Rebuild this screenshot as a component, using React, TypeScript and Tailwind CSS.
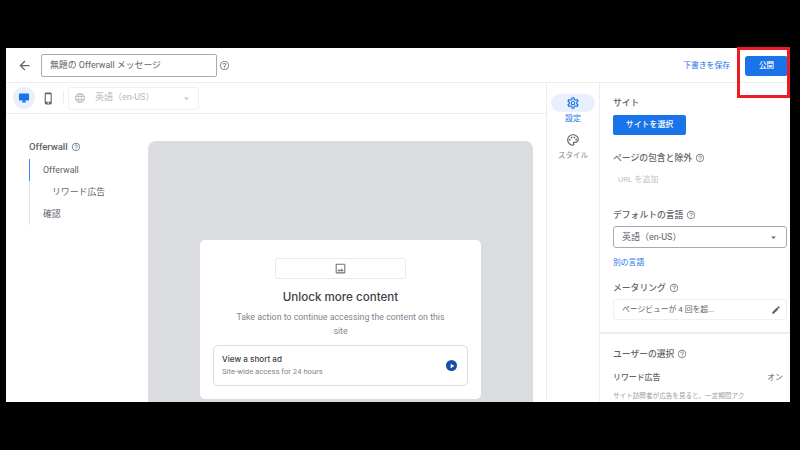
import React from "react";
import { MdArrowBack, MdDesktopWindows, MdPhoneIphone, MdLanguage, MdOutlineSettings, MdOutlinePalette, MdEdit, MdHelpOutline, MdOutlineImage, MdPlayArrow, MdArrowDropDown } from "react-icons/md";

const Help = ({ cls = "" }: { cls?: string }) => <MdHelpOutline className={"text-[#80868b] shrink-0 " + cls} />;

export default function App() {
  return (
    <div className="relative w-[800px] h-[450px] bg-black overflow-hidden pt-[48px] pl-[6px] font-['Roboto','Noto_Sans_CJK_JP',sans-serif]">
      <div className="w-[784px] h-[354px] bg-white overflow-hidden flex flex-col">
        {/* header */}
        <div className="h-[35px] shrink-0 border-b border-[#eceef0] flex items-center pl-[11px] pt-[1px]">
          <MdArrowBack className="text-[15px] text-[#5f6368] mr-[9px]" />
          <div className="w-[176px] h-[23px] border border-[#a8abb0] rounded-[2px] flex items-center pl-[8px] text-[8.9px] text-[#5f6368]">無題の Offerwall メッセージ</div>
          <Help cls="text-[11px] ml-[2px]" />
          <div className="ml-auto text-[7.8px] text-[#1a73e8] mr-[15px] whitespace-nowrap">下書きを保存</div>
          <div className="w-[43px] h-[20px] bg-[#1a73e8] rounded-[3px] text-white text-[7.5px] font-medium flex items-center justify-center mr-[2px]">公開</div>
        </div>
        <div className="flex-1 flex min-h-0">
          {/* main */}
          <div className="w-[541px] shrink-0 border-r border-[#eceef0] flex flex-col">
            <div className="h-[31px] shrink-0 border-b border-[#eceef0] flex items-center pl-[7px]">
              <div className="w-[22px] h-[22px] rounded-full bg-[#e8f0fe] flex items-center justify-center">
                <MdDesktopWindows className="text-[12px] text-[#1a73e8]" />
              </div>
              <MdPhoneIphone className="text-[13px] text-[#5f6368] ml-[7px]" />
              <div className="w-px h-[14px] bg-[#eceef0] ml-[8px]" />
              <div className="w-[131px] h-[23px] border border-[#eef0f1] rounded-[3px] ml-[4px] flex items-center pl-[5px] text-[9px] text-[#b5b8bc]">
                <MdLanguage className="text-[12px] text-[#bdc1c6]" />
                <span className="ml-[9px]">英語（en-US）</span>
                <MdArrowDropDown className="text-[11px] ml-auto mr-[6px] text-[#bdc1c6]" />
              </div>
            </div>
            <div className="flex-1 flex min-h-0">
              {/* nav */}
              <div className="w-[142px] shrink-0 pl-[23px] pt-[26px]">
                <div className="flex items-center gap-[3px] h-[14px] text-[9.5px] font-medium text-[#5f6368]">Offerwall<Help cls="text-[10px]" /></div>
                <div className="flex mt-[5px] w-[100px] text-[#5f6368] text-[8.9px]">
                  <div className="w-px shrink-0 flex flex-col">
                    <div className="h-[22px] bg-[#4285f4]" />
                    <div className="h-[44px] bg-[#e3e5e8]" />
                  </div>
                  <div className="pt-[1px]">
                    <div className="h-[22px] pl-[13px] flex items-center">Offerwall</div>
                    <div className="h-[22px] pl-[22px] flex items-center whitespace-nowrap">リワード広告</div>
                    <div className="h-[21px] pl-[13px] flex items-center">確認</div>
                  </div>
                </div>
              </div>
              {/* preview */}
              <div className="w-[385px] h-[300px] mt-[27px] bg-[#dadce0] rounded-t-[8px] pl-[52px] pt-[99px]">
                <div className="w-[281px] h-[159px] bg-white rounded-[5px] pt-[18px] flex flex-col items-center">
                  <div className="w-[131px] h-[21px] border border-[#e8eaed] rounded-[2px] flex items-center justify-center">
                    <MdOutlineImage className="text-[13px] text-[#6f7276]" />
                  </div>
                  <div className="mt-[10px] text-[11.6px] leading-[17px] font-medium text-[#3c4043] font-['Inter',sans-serif]">Unlock more content</div>
                  <div className="mt-[2px] w-[220px] text-center text-[8.8px] leading-[14px] text-[#80868b] pt-[2px]">Take action to continue accessing the content on this site</div>
                  <div className="mt-[7px] w-[255px] h-[41px] border border-[#dadce0] rounded-[5px] flex items-center pl-[8px] pr-[10px]">
                    <div className="flex-1">
                      <div className="text-[8.1px] leading-[12px] font-medium text-[#3c4043] font-['Inter',sans-serif]">View a short ad</div>
                      <div className="text-[7.7px] leading-[12px] mt-[1px] text-[#80868b]">Site-wide access for 24 hours</div>
                    </div>
                    <div className="w-[11px] h-[11px] rounded-full bg-[#174ea6] flex items-center justify-center">
                      <MdPlayArrow className="text-[8px] text-white" />
                    </div>
                  </div>
                </div>
              </div>
            </div>
          </div>
          {/* tabs */}
          <div className="w-[53px] shrink-0 border-r border-[#eceef0] flex flex-col items-center pt-[11px]">
            <div className="w-[44px] h-[18px] rounded-full bg-[#e8f0fe] flex items-center justify-center">
              <MdOutlineSettings className="text-[14px] text-[#1a73e8]" />
            </div>
            <div className="text-[8px] leading-[12px] text-[#1a73e8] mt-[1px]">設定</div>
            <MdOutlinePalette className="text-[14px] text-[#5f6368] mt-[8px]" />
            <div className="text-[7.5px] leading-[12px] text-[#80868b] mt-[3px] whitespace-nowrap">スタイル</div>
          </div>
          {/* panel */}
          <div className="flex-1 min-w-0 overflow-hidden">
            <div className="pl-[13px] pr-[3px] pt-[13px] h-[251px] border-b-2 border-[#eceef0]">
              <div className="text-[8.8px] leading-[14px] font-medium text-[#5f6368]">サイト</div>
              <div className="mt-[5px] w-[73px] h-[20px] bg-[#1a73e8] rounded-[2px] text-white text-[7.9px] font-medium flex items-center justify-center">サイトを選択</div>
              <div className="mt-[16px] flex items-center gap-[3px] text-[8.8px] leading-[14px] font-medium text-[#5f6368]">ページの包含と除外<Help cls="text-[10px]" /></div>
              <div className="mt-[9px] pl-[5px] text-[8px] leading-[12px] text-[#bdc1c6]">URL を追加</div>
              <div className="mt-[22px] flex items-center gap-[3px] text-[8.8px] leading-[14px] font-medium text-[#5f6368]">デフォルトの言語<Help cls="text-[10px]" /></div>
              <div className="mt-[4px] h-[22px] border border-[#a8abb0] rounded-[3px] flex items-center pl-[8px] pr-[7px] pt-[1px] text-[9px] text-[#5f6368]">
                英語（en-US）
                <MdArrowDropDown className="text-[11px] ml-auto text-[#5f6368]" />
              </div>
              <div className="mt-[9px] text-[7.8px] leading-[12px] text-[#1a73e8]">別の言語</div>
              <div className="mt-[12px] flex items-center gap-[3px] text-[8.8px] leading-[14px] font-medium text-[#5f6368]">メータリング<Help cls="text-[10px]" /></div>
              <div className="mt-[4px] h-[21px] border border-[#eef0f1] rounded-[3px] flex items-center pl-[8px] pr-[5px] text-[7.8px] text-[#5f6368]">
                ページビューが 4 回を超...
                <MdEdit className="text-[10px] ml-auto text-[#5f6368]" />
              </div>
            </div>
            <div className="pl-[13px] pr-[7px] pt-[13px]">
              <div className="flex items-center gap-[3px] text-[8.8px] leading-[14px] font-medium text-[#5f6368]">ユーザーの選択<Help cls="text-[10px]" /></div>
              <div className="mt-[11px] flex justify-between text-[7.9px] leading-[12px] text-[#5f6368]"><span className="font-medium">リワード広告</span><span>オン</span></div>
              <div className="mt-[7px] text-[6.6px] leading-[11px] text-[#9aa0a6] whitespace-nowrap">サイト訪問者が広告を見ると、一定期間アク</div>
            </div>
          </div>
        </div>
      </div>
      <div className="absolute left-[737px] top-[47px] w-[53px] h-[51px] border-[3px] border-[#ed1c24]" />
    </div>
  );
}
